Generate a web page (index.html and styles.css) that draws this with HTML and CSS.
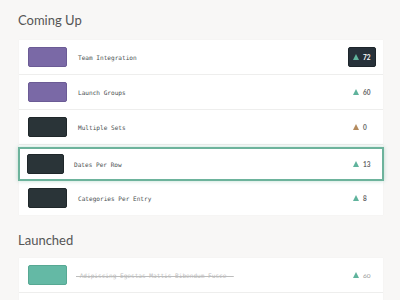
FILE: index.html
```html
<!DOCTYPE html>
<html>
<head>
<meta charset="utf-8">
<link rel="stylesheet" href="styles.css">
</head>
<body>
<section class="section">
  <h2 class="heading">Coming Up</h2>
  <ul class="card">
    <li class="row">
      <span class="swatch purple"></span>
      <span class="name">Team Integration</span>
      <span class="vote active"><span class="tri teal"></span><span class="num">72</span></span>
    </li>
    <li class="row">
      <span class="swatch purple"></span>
      <span class="name">Launch Groups</span>
      <span class="vote"><span class="tri teal"></span><span class="num">60</span></span>
    </li>
    <li class="row">
      <span class="swatch dark"></span>
      <span class="name">Multiple Sets</span>
      <span class="vote"><span class="tri brown"></span><span class="num">0</span></span>
    </li>
    <li class="row dragging">
      <span class="swatch dark"></span>
      <span class="name">Dates Per Row</span>
      <span class="vote"><span class="tri teal"></span><span class="num">13</span></span>
    </li>
    <li class="row last">
      <span class="swatch dark"></span>
      <span class="name">Categories Per Entry</span>
      <span class="vote"><span class="tri teal"></span><span class="num">8</span></span>
    </li>
  </ul>
</section>
<section class="section launched">
  <h2 class="heading">Launched</h2>
  <ul class="card tall">
    <li class="row done">
      <span class="swatch green"></span>
      <span class="name strike">&nbsp;Adipiscing Egestas Mattis Bibendum Fusce&nbsp;&nbsp;</span>
      <span class="vote"><span class="tri teal"></span><span class="num">60</span></span>
    </li>
  </ul>
</section>
</body>
</html>
```

FILE: styles.css
```css
* { box-sizing: border-box; }
html, body { margin: 0; padding: 0; }
body {
  background: #f8f7f6;
  font-family: Lato, "Open Sans", sans-serif;
  width: 400px;
  height: 300px;
  overflow: hidden;
}
.section {
  padding: 12px 17px 0 19px;
}
.heading {
  margin: 0 0 12px -1px;
  font-size: 13px;
  line-height: 16px;
  font-weight: 400;
  color: #555;
}
.card {
  list-style: none;
  margin: 0;
  padding: 0;
  background: #fff;
  box-shadow: 0 0 1px rgba(0,0,0,0.06);
}
.card.tall { min-height: 50px; }
.row {
  display: flex;
  align-items: center;
  height: 35px;
  padding: 0 7px 0 9px;
  border-bottom: 1px solid #eeeeed;
  background: #fff;
}
.row.last { border-bottom: none; height: 34px; }
.row.dragging {
  height: 34px;
  margin: 2px -1px 0 -1px;
  padding: 0 6px 0 7px;
  border: 2px solid #6db39c;
  box-shadow: 0 0 4px rgba(109,179,156,0.45);
  position: relative;
}
.row.dragging .swatch { width: 37px; }
.row.dragging .name { margin-left: 10px; }
.swatch {
  width: 39px;
  height: 20px;
  border-radius: 2px;
  flex: none;
}
.purple { background: #7a69a6; border: 1px solid #6b5b95; }
.dark { background: #2a3438; border: 1px solid #1f272a; }
.green { background: #64b9a5; border: 1px solid #57a893; }
.name {
  margin-left: 11px;
  flex: 1;
  font-family: "DejaVu Sans Mono", "Liberation Mono", monospace;
  font-size: 6.1px;
  color: #4a4f52;
  white-space: nowrap;
}
.strike {
  margin-left: 9px;
  flex: none;
  color: #bdbdbd;
  text-decoration: line-through;
}
.done .vote { margin-left: auto; }
.vote {
  display: inline-flex;
  align-items: center;
  height: 20px;
  width: 28px;
  padding: 0 0 0 5px;
  border-radius: 2px;
  flex: none;
}
.vote.active {
  background: #27313a;
  border: 1px solid #1d252b;
  padding-left: 4px;
}
.tri {
  width: 0;
  height: 0;
  border-left: 3px solid transparent;
  border-right: 3px solid transparent;
  border-bottom: 6px solid #5fb39c;
  margin-right: 4px;
}
.tri.brown { border-bottom-color: #b48b5e; }
.num {
  font-family: Lato, "Open Sans", sans-serif;
  font-size: 6.5px;
  font-weight: 700;
  color: #666;
}
.active .num { color: #fff; }
.launched { padding-top: 17px; }
.launched .heading { margin-bottom: 10px; }
.done .num { color: #999; font-weight: 400; }
```
